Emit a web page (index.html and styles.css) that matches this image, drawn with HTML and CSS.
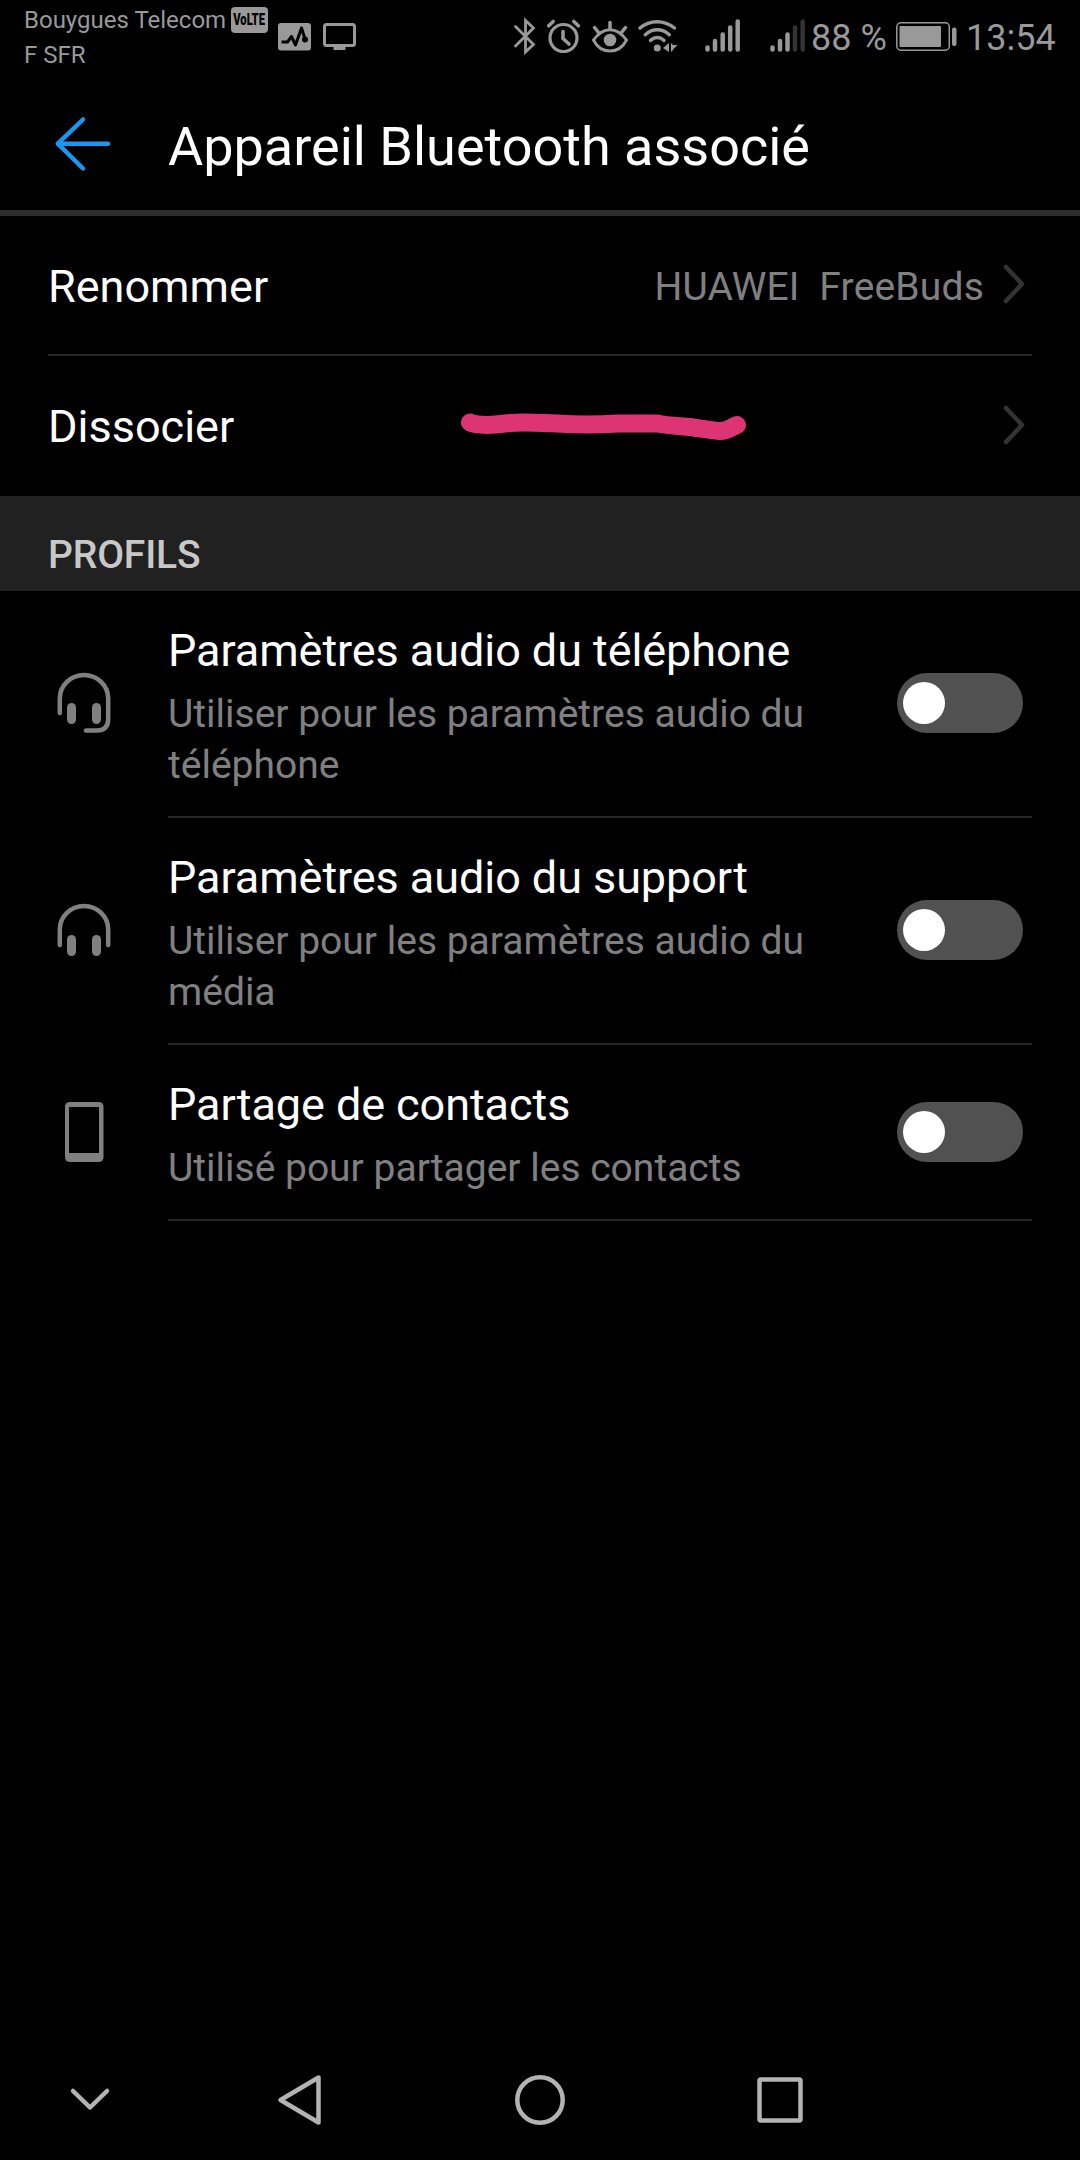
FILE: index.html
```html
<!DOCTYPE html>
<html lang="fr">
<head>
<meta charset="utf-8">
<title>Appareil Bluetooth associé</title>
<link rel="stylesheet" href="styles.css">
</head>
<body>
<div class="screen">
  <div class="status">
    <div class="carriers">
      <div class="carrier"><span>Bouygues Telecom</span><span class="volte"><span class="volte-text">VoLTE</span></span></div>
      <div class="carrier">F SFR</div>
    </div>
    <div class="notifications">
      <svg width="33" height="28" viewBox="278 23 33 28"><rect x="278" y="23" width="33" height="27.500" rx="3" fill="#999"/><path d="M281.500 42h6l4-5.500 4 8.500 6-17 3.500 11" fill="none" stroke="#000" stroke-width="3" stroke-linejoin="round"/><circle cx="305" cy="39.500" r="3" fill="#000"/></svg>
      <svg width="33" height="28" viewBox="323 23 33 28"><rect x="324.500" y="24.500" width="30" height="21" rx="2" fill="none" stroke="#999" stroke-width="3"/><path d="M333.500 46h12v4h-12z" fill="#999"/></svg>
    </div>
    <div class="indicators">
      <svg width="294" height="40" viewBox="512 17 294 40" fill="none" stroke="#999" stroke-width="3" stroke-linecap="round">
        <path d="M515.500 26.500l18 18-8 7.500V20.500l8 7.500-18 18" stroke-width="2.800" stroke-linejoin="miter"/>
        <circle cx="563.500" cy="38" r="13.500" stroke-width="3.200"/>
        <path d="M563 31.500v7l6 5.500M548.700 25.800l4.500-4.300M578.300 25.800l-4.500-4.300" stroke-width="3.600"/>
        <path d="M593.500 40c5-7 10.500-10.300 16.500-10.300s11.500 3.300 16.500 10.300c-4 8-9.500 11-16.500 11s-12.500-3-16.500-11z" stroke-width="2.900"/>
        <circle cx="610" cy="40" r="6.300" fill="#999" stroke="none"/>
        <path d="M610 22.500v6M594.500 27.500l4 5M625.500 27.500l-4 5" stroke-width="3.500"/>
        <path d="M640 28c10-8.500 24-8.500 34.500 0M645.300 34.700c7.500-6.500 16.500-6.500 24 0M650.500 40.300c4.500-3.700 9-3.700 13.500 0" stroke-width="3.500"/>
        <circle cx="657.300" cy="48" r="3.500" fill="#999" stroke="none"/>
        <path d="M669 43v9l-6-4zM671 43v9M671.500 45h6l-6 6z" fill="#999" stroke="none"/>
        <path d="M671.700 44v7" stroke-width="1.500"/>
        <path d="M707.500 47.500v2M715 41v8.500M722.700 34.500v15M730.200 27.500v22M737.700 21.500v28M772.500 47.500v2M780 41v8.500M787.500 34.500v15" stroke-width="4.500"/>
        <path d="M795 27.500v22M802.700 21.500v28" stroke="#333" stroke-width="4.500"/>
      </svg>
      <span class="percent">88 %</span>
      <svg class="battery" width="62" height="30" viewBox="896 22 62 30"><rect x="896.800" y="22.800" width="52.500" height="27.400" rx="4" fill="none" stroke="#999" stroke-width="1.500"/><rect x="899.500" y="26" width="41.500" height="21" rx="1" fill="#999"/><rect x="952" y="27.500" width="4.500" height="18.500" rx="2" fill="#999"/></svg>
      <span class="clock">13:54</span>
    </div>
  </div>

  <header class="header">
    <svg class="back" width="60" height="60" viewBox="53 114 60 60"><path d="M83 119.500L57.800 143.700L83 168.500M57.800 143.700H108" fill="none" stroke="#1a96f0" stroke-width="4.500" stroke-linecap="round" stroke-linejoin="round"/></svg>
    <h1 class="title">Appareil Bluetooth associé</h1>
  </header>

  <div class="setting setting-ruled">
    <span class="label">Renommer</span>
    <span class="value">HUAWEI&nbsp; FreeBuds</span>
    <svg class="chevron" width="22" height="42" viewBox="0 0 22 42"><path d="M3 4L19 21L3 38" /></svg>
  </div>
  <div class="setting">
    <span class="label">Dissocier</span>
    <svg class="scribble" width="288" height="32" viewBox="460 411 288 32"><path d="M470 423.500C477 427 495 426 505 424.500C520 422.500 530 423.500 557 424.500C577 426 597 426 618 424.500C635 424.500 645 424.500 657 424.500C670 427 682 427 690 428C705 430 713 431.500 720 432C729 432 731 428 737 426" /></svg>
    <svg class="chevron" width="22" height="42" viewBox="0 0 22 42"><path d="M3 4L19 21L3 38" /></svg>
  </div>

  <h2 class="section">PROFILS</h2>

  <div class="profile">
    <svg class="glyph" width="56" height="62" viewBox="56 672 56 62"><path d="M59.800 713V698.500a24.200 23.500 0 0 1 48.400 0V719q0 11.500-11.500 11.500H86"/><rect x="67" y="703" width="9" height="21" rx="4.500"/><rect x="92" y="703" width="9" height="21" rx="4.500"/></svg>
    <div class="profile-body">
      <div class="profile-text"><div class="name">Paramètres audio du téléphone</div><div class="hint">Utiliser pour les paramètres audio du<br>téléphone</div></div>
      <span class="toggle"><span class="knob"></span></span>
    </div>
  </div>
  <div class="profile">
    <svg class="glyph" width="56" height="62" viewBox="56 899 56 62"><path d="M59.800 945V929.500a24.200 23.500 0 0 1 48.400 0V945"/><rect x="67" y="935" width="9" height="21" rx="4.500"/><rect x="92" y="935" width="9" height="21" rx="4.500"/></svg>
    <div class="profile-body">
      <div class="profile-text"><div class="name">Paramètres audio du support</div><div class="hint">Utiliser pour les paramètres audio du<br>média</div></div>
      <span class="toggle"><span class="knob"></span></span>
    </div>
  </div>
  <div class="profile">
    <svg class="glyph" width="56" height="62" viewBox="56 1101 56 62"><path class="solid" fill-rule="evenodd" d="M70 1102h28.500q5 0 5 5v50q0 5-5 5H70q-5 0-5-5v-50q0-5 5-5zM69 1107v46h30v-46z"/></svg>
    <div class="profile-body">
      <div class="profile-text"><div class="name">Partage de contacts</div><div class="hint">Utilisé pour partager les contacts</div></div>
      <span class="toggle"><span class="knob"></span></span>
    </div>
  </div>

  <nav class="nav">
    <svg width="60" height="60" viewBox="60 2070 60 60"><path d="M73 2091L90 2107.500L107 2091"/></svg>
    <svg width="60" height="60" viewBox="270 2070 60 60"><path d="M318.500 2077.500V2122.500L280.500 2100Z"/></svg>
    <svg width="60" height="60" viewBox="510 2070 60 60"><circle cx="540" cy="2100" r="22.700"/></svg>
    <svg width="60" height="60" viewBox="750 2070 60 60"><rect x="759.500" y="2079.500" width="41" height="41" rx="1.500"/></svg>
  </nav>
</div>
</body>
</html>
```
FILE: styles.css
```css
* { box-sizing: border-box; }
body { margin: 0; background: #000; font-family: Roboto, sans-serif; }
svg { display: block; flex: none; }
.screen { display: flex; flex-direction: column; width: 1080px; height: 2160px; background: #000; color: #fff; white-space: nowrap; }

.status { display: flex; height: 83px; padding-left: 24px; padding-right: 24px; color: #999; }
.carriers { width: 254px; padding-top: 3px; font-size: 24px; line-height: 34.500px; }
.carrier { display: flex; height: 34.500px; }
.volte { display: flex; justify-content: center; width: 37px; height: 26px; margin: 4px 10px 0 auto; border-radius: 4px; background: #999; }
.volte-text { color: #000; font-size: 17px; font-weight: 900; line-height: 25px; transform: scaleX(0.660); }
.notifications { display: flex; gap: 12px; padding-top: 23px; }
.indicators { display: flex; align-items: flex-start; margin-left: auto; padding-top: 17px; font-size: 36px; line-height: 42px; }
.percent { width: 85px; margin-left: 5px; }
.battery { margin-top: 5px; }
.clock { width: 90px; margin-left: 8px; }

.header { display: flex; align-items: center; height: 133px; padding-left: 53px; border-bottom: 6px solid #2d2d2d; }
.back { margin-top: -5px; }
.title { margin: 0 0 0 55px; font-size: 54px; font-weight: 400; line-height: 64px; }

.setting { display: flex; align-items: center; height: 140px; margin: 0 48px; padding-right: 7px; }
.setting-ruled { border-bottom: 2px solid #282828; }
.label { padding-top: 1px; font-size: 45px; line-height: 54px; }
.setting-ruled .label { padding-top: 3px; }
.value { margin-left: auto; margin-right: 19px; padding-top: 3px; font-size: 39px; line-height: 46px; letter-spacing: 0.180px; color: #808080; }
.chevron { margin-top: -2px; margin-left: auto; fill: none; stroke: #333; stroke-width: 4.500; stroke-linecap: round; stroke-linejoin: round; }
.value + .chevron { margin-left: 0; }
.scribble { margin-left: 226px; fill: none; stroke: #dc3474; stroke-width: 18; stroke-linecap: round; stroke-linejoin: round; }

.section { height: 95px; margin: 0; padding: 33px 48px 0; background: #212121; color: #c8c8c8; font-size: 39px; font-weight: 500; line-height: 52px; letter-spacing: -0.150px; }

.profile { display: flex; align-items: center; padding: 0 48px 0 56px; }
.glyph { fill: none; stroke: #808080; stroke-width: 4.500; stroke-linecap: round; margin-top: -3px; }
.glyph rect, .glyph .solid { fill: #808080; stroke: none; }
.profile-body { display: flex; flex: 1; align-items: center; justify-content: space-between; margin-left: 56px; padding-right: 9px; border-bottom: 2px solid #282828; }
.profile-text { padding: 33px 0 25px; }
.name { font-size: 45px; line-height: 54px; letter-spacing: -0.070px; }
.hint { margin-top: 11px; font-size: 39px; line-height: 51px; color: #808080; }
.toggle { display: flex; align-items: center; width: 126px; height: 60px; margin-top: -1px; padding-left: 6px; border-radius: 30px; background: #515151; }
.knob { width: 42px; height: 42px; border-radius: 50%; background: #fff; }

.nav { display: grid; grid-template-columns: 210px 240px 240px 60px; height: 120px; margin-top: auto; padding: 30px 0 0 60px; fill: none; stroke: #b3b3b3; stroke-width: 4.500; stroke-linecap: round; stroke-linejoin: round; }
```
